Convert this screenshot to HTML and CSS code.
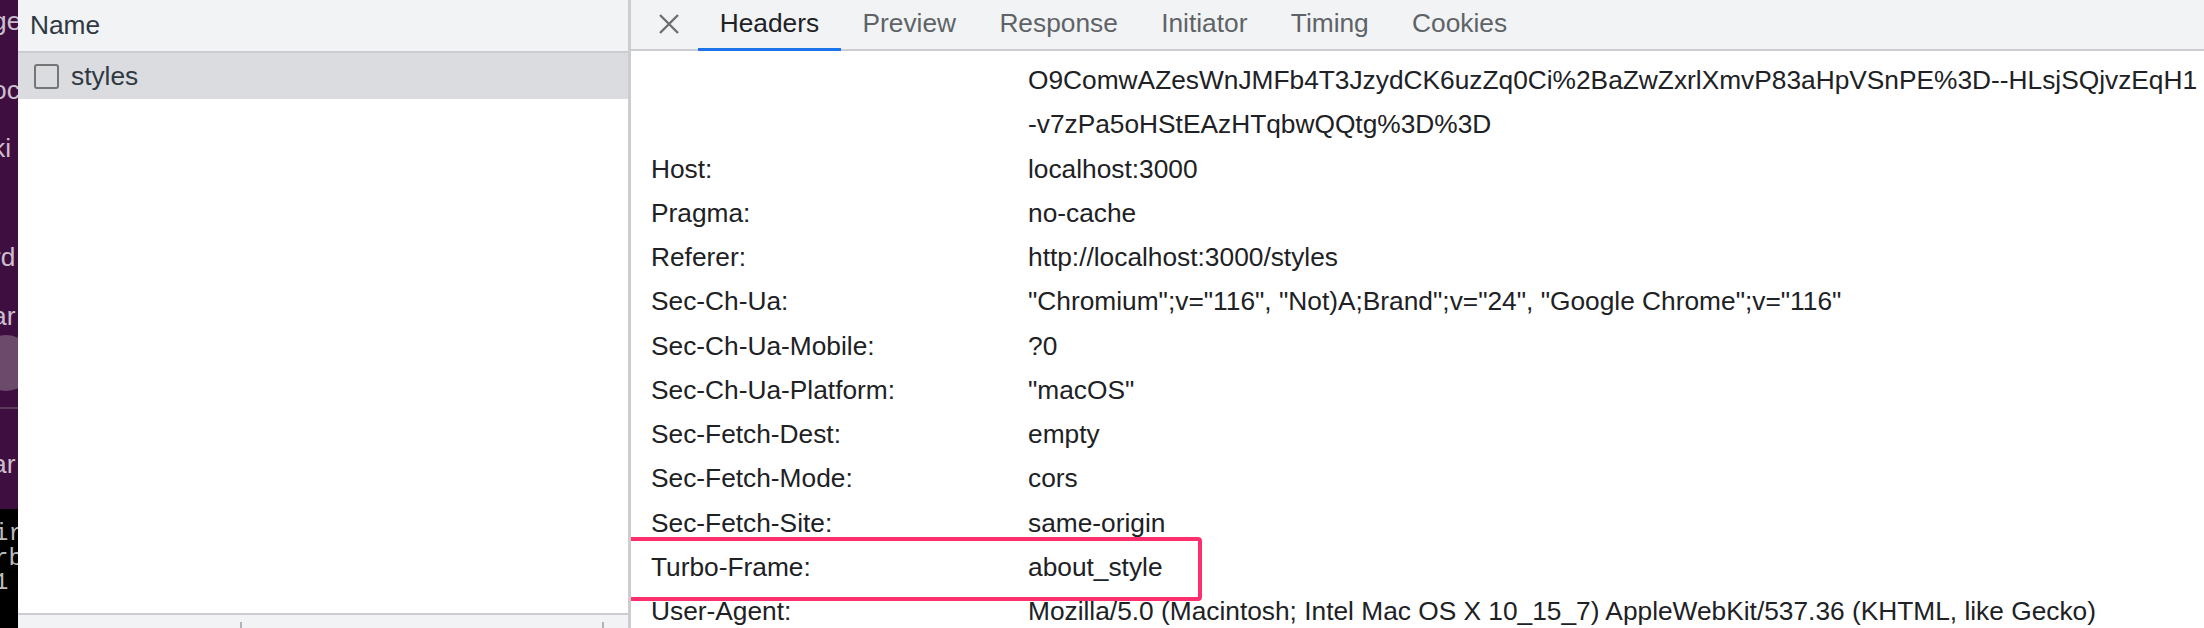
FILE: index.html
```html
<!DOCTYPE html>
<html lang="en">
<head>
<meta charset="utf-8">
<title>Network – Headers</title>
<link rel="stylesheet" href="styles.css">
</head>
<body>
<div class="app">
  <aside class="strip">
    <div class="strip-top">
      <div class="s-line s-ge"><span>ge</span></div>
      <div class="s-line s-oc"><span>oc</span></div>
      <div class="s-line s-ki"><span>ki</span></div>
      <div class="s-line s-rd"><span>rd</span></div>
      <div class="s-line s-ar"><span>ar</span></div>
      <div class="s-circle"><span>↓</span></div>
      <div class="s-sep"></div>
      <div class="s-line s-ar2"><span>ar</span></div>
    </div>
    <div class="strip-term">
      <div class="t-line"><span>ir</span></div>
      <div class="t-line"><span>rb</span></div>
      <div class="t-line"><span>1</span></div>
    </div>
  </aside>

  <section class="netlist">
    <div class="nl-head">Name</div>
    <div class="nl-row"><span class="cb"></span><span>styles</span></div>
    <div class="nl-empty"></div>
    <div class="nl-foot"><span class="tick tick-a"></span><span class="tick tick-b"></span></div>
  </section>

  <section class="detail">
    <div class="tabbar">
      <div class="close">
        <svg width="22" height="22" viewBox="0 0 22 22"><path d="M2 2 L20 20 M20 2 L2 20" stroke="#6e6e6e" stroke-width="2.4" fill="none"/></svg>
      </div>
      <div class="tab active">Headers</div>
      <div class="tab">Preview</div>
      <div class="tab">Response</div>
      <div class="tab">Initiator</div>
      <div class="tab">Timing</div>
      <div class="tab">Cookies</div>
    </div>
    <div class="headers">
      <div class="hrow"><div class="hk"></div><div class="hv">O9ComwAZesWnJMFb4T3JzydCK6uzZq0Ci%2BaZwZxrlXmvP83aHpVSnPE%3D--HLsjSQjvzEqH1<br>-v7zPa5oHStEAzHTqbwQQtg%3D%3D</div></div>
      <div class="hrow"><div class="hk">Host:</div><div class="hv">localhost:3000</div></div>
      <div class="hrow"><div class="hk">Pragma:</div><div class="hv">no-cache</div></div>
      <div class="hrow"><div class="hk">Referer:</div><div class="hv">http://localhost:3000/styles</div></div>
      <div class="hrow"><div class="hk">Sec-Ch-Ua:</div><div class="hv">"Chromium";v="116", "Not)A;Brand";v="24", "Google Chrome";v="116"</div></div>
      <div class="hrow"><div class="hk">Sec-Ch-Ua-Mobile:</div><div class="hv">?0</div></div>
      <div class="hrow"><div class="hk">Sec-Ch-Ua-Platform:</div><div class="hv">"macOS"</div></div>
      <div class="hrow"><div class="hk">Sec-Fetch-Dest:</div><div class="hv">empty</div></div>
      <div class="hrow"><div class="hk">Sec-Fetch-Mode:</div><div class="hv">cors</div></div>
      <div class="hrow"><div class="hk">Sec-Fetch-Site:</div><div class="hv">same-origin</div></div>
      <div class="hrow marked"><div class="hk">Turbo-Frame:</div><div class="hv">about_style</div></div>
      <div class="hrow"><div class="hk">User-Agent:</div><div class="hv">Mozilla/5.0 (Macintosh; Intel Mac OS X 10_15_7) AppleWebKit/537.36 (KHTML, like Gecko)</div></div>
    </div>
  </section>
</div>
</body>
</html>
```

FILE: styles.css
```css
* { box-sizing: border-box; }

html, body {
  margin: 0;
  padding: 0;
}

body {
  width: 2204px;
  height: 628px;
  overflow: hidden;
  background: #ffffff;
  font-family: "Liberation Sans", Arial, Helvetica, sans-serif;
  font-size: 26.3px;
  color: #202124;
}

.app {
  display: flex;
  height: 628px;
}

/* ---------- background app strip on the far left ---------- */
.strip {
  width: 18px;
  flex: none;
  display: flex;
  flex-direction: column;
  overflow: hidden;
  background: #3f0e40;
}

.strip-top {
  height: 509px;
  flex: none;
  display: flex;
  flex-direction: column;
  color: #cdbfcd;
}

.s-line {
  height: 30px;
  line-height: 30px;
  display: flex;
  justify-content: flex-start;
  white-space: nowrap;
  flex: none;
  margin-left: -8px;
}

.s-ge { margin-top: 6px; }
.s-oc { margin-top: 39px; }
.s-ki { margin-top: 28px; }
.s-rd { margin-top: 79px; }
.s-ar { margin-top: 29px; }
.s-ar2 { margin-top: 40px; }

.s-circle {
  flex: none;
  width: 56px;
  height: 56px;
  margin-top: 4px;
  margin-left: -22px;
  border-radius: 50%;
  background: #6b4a6c;
  color: #ece2ec;
  display: flex;
  align-items: center;
  justify-content: flex-end;
  padding-right: 6px;
  font-size: 24px;
}

.s-sep {
  flex: none;
  height: 2px;
  margin-top: 16px;
  background: #5a3a5b;
}

.strip-term {
  flex: 1;
  background: #000000;
  color: #bdbdbd;
  font-family: "Liberation Mono", "DejaVu Sans Mono", monospace;
  font-size: 24px;
  padding-top: 13px;
}

.t-line {
  height: 24.5px;
  line-height: 24.5px;
  display: flex;
  white-space: nowrap;
  margin-left: -6px;
}

/* ---------- request list ---------- */
.netlist {
  width: 613px;
  flex: none;
  display: flex;
  flex-direction: column;
  border-right: 3px solid #cbcdd1;
  color: #303942;
}

.nl-head {
  height: 53px;
  flex: none;
  background: #f1f3f4;
  border-bottom: 2px solid #cbcdd1;
  display: flex;
  align-items: center;
  padding-left: 12px;
}

.nl-row {
  height: 46px;
  flex: none;
  background: #dadce0;
  display: flex;
  align-items: center;
  padding-left: 16px;
  gap: 12px;
}

.cb {
  width: 25px;
  height: 25px;
  border: 2px solid #757575;
  border-radius: 3px;
}

.nl-empty {
  flex: 1;
}

.nl-foot {
  height: 15px;
  flex: none;
  background: #f1f3f4;
  border-top: 2px solid #cbcdd1;
  display: flex;
  align-items: flex-end;
}

.tick {
  width: 2px;
  height: 6px;
  background: #b0b4ba;
}

.tick-a { margin-left: 222px; }
.tick-b { margin-left: 360px; }

/* ---------- detail panel ---------- */
.detail {
  flex: 1;
  min-width: 0;
  display: flex;
  flex-direction: column;
  overflow: hidden;
}

.tabbar {
  height: 51px;
  flex: none;
  display: flex;
  align-items: stretch;
  padding-left: 27px;
  background: #f1f3f4;
  box-shadow: inset 0 -2px 0 #cbcdd1;
}

.close {
  width: 22px;
  margin-right: 18px;
  display: flex;
  align-items: center;
  padding-bottom: 4px;
}

.close svg { display: block; }

.tab {
  padding: 0 21.7px 4px;
  display: flex;
  align-items: center;
  color: #5f6368;
  white-space: nowrap;
}

.tab.active {
  color: #202124;
  box-shadow: inset 0 -3px 0 #1a73e8;
}

.headers {
  padding-top: 7px;
  padding-left: 20px;
}

.hrow {
  display: flex;
  line-height: 44.27px;
  white-space: nowrap;
}

.hk {
  width: 377px;
  flex: none;
}

.hv {
  flex: none;
}

.hrow.marked {
  position: relative;
}

.hrow.marked::after {
  content: "";
  position: absolute;
  left: -24px;
  top: -8px;
  width: 567px;
  height: 56px;
  border: 4px solid #ff2f6e;
  border-radius: 4px;
}
```
